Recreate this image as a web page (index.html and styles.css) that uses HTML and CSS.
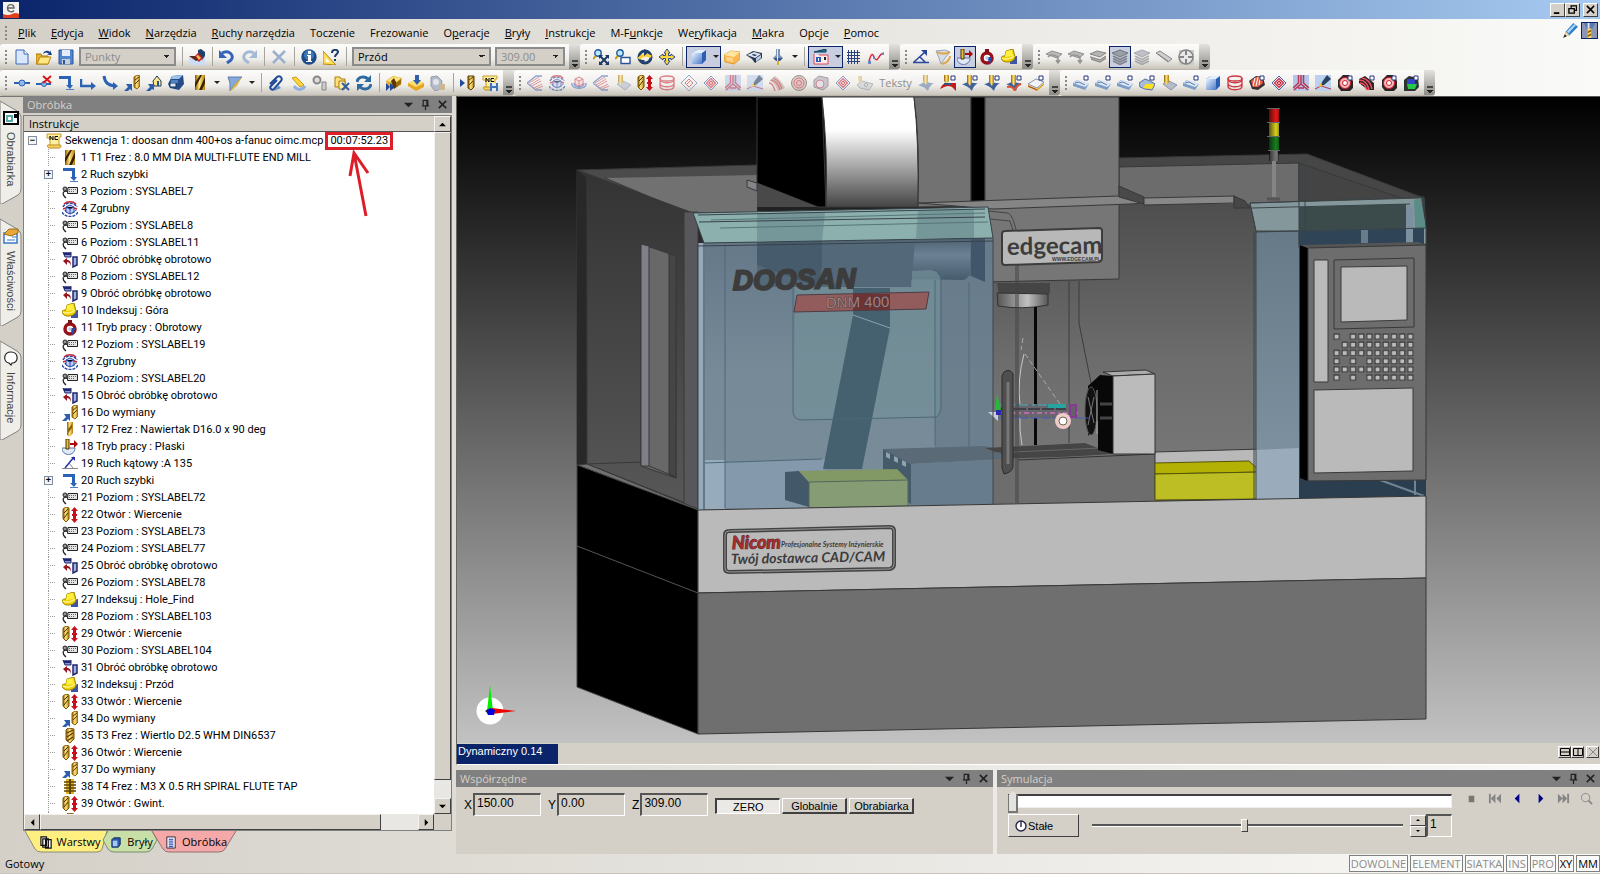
FILE: index.html
```html
<!DOCTYPE html>
<html lang="pl">
<head>
<meta charset="utf-8">
<title>Edgecam</title>
<link rel="stylesheet" href="styles.css">
</head>
<body>
<svg class="defs" aria-hidden="true">
<defs>
<linearGradient id="gold" x1="0" x2="1"><stop offset="0" stop-color="#8a5a00"/><stop offset=".45" stop-color="#ffe680"/><stop offset="1" stop-color="#b07a10"/></linearGradient>
<linearGradient id="blu" x1="0" x2="1" y2="1"><stop offset="0" stop-color="#e8f2ff"/><stop offset="1" stop-color="#4a7ac8"/></linearGradient>
</defs>
<symbol id="new" viewBox="0 0 16 16"><path d="M2 1h8l4 4v10H2z" fill="#dbe8fb" stroke="#3c66b8"/><path d="M10 1v4h4" fill="#fff" stroke="#3c66b8"/></symbol>
<symbol id="open" viewBox="0 0 16 16"><path d="M0 15V5h5l1 2h6v8z" fill="#e8b030" stroke="#a87810"/><path d="M1 15l3-7h11l-3 7z" fill="#ffe680" stroke="#b88a18"/><path d="M7 5c1-4 5-4 7-2V1l2 5h-5l2-1c-2-2-4-2-6 0z" fill="#1b3f8c"/></symbol>
<symbol id="save" viewBox="0 0 16 16"><path d="M1 1h14v14H1z" fill="#4f86cf" stroke="#2b569c"/><path d="M4 1h8v6H4z" fill="#e3ecf8"/><path d="M4 10h8v5H4z" fill="#c8ced8"/><path d="M5 11h2v4H5z" fill="#2b569c"/></symbol>
<symbol id="paint" viewBox="0 0 16 16"><path d="M0 8h16v8H0z" fill="#cdddf8"/><path d="M9 6V1l3-1 4 3v4l-3 4z" fill="#20406c"/><path d="M5 8l4-4 5 5-4 4z" fill="#c81e18"/><path d="M7 7l2-1 3 3-2 2z" fill="#f0c060"/><path d="M0 7h6l3 4-2 1z" fill="#5a2818"/></symbol>
<symbol id="undo" viewBox="0 0 16 16"><path d="M3 4c7-4 13 3 9 7l-4 3" fill="none" stroke="#3563b8" stroke-width="3"/><path d="M0 1v8h8z" fill="#3563b8"/></symbol>
<symbol id="redo" viewBox="0 0 16 16"><path d="M13 4c-7-4-13 3-9 7l4 3" fill="none" stroke="#a3b9d4" stroke-width="3"/><path d="M16 1v8H8z" fill="#a3b9d4"/></symbol>
<symbol id="del" viewBox="0 0 16 16"><path d="M2 2l12 12M14 2L2 14" stroke="#9bb0cf" stroke-width="2.5"/></symbol>
<symbol id="info" viewBox="0 0 16 16"><circle cx="8" cy="8" r="7.700" fill="#1d4c86"/><circle cx="8" cy="6" r="5" fill="#3d78b8"/><path d="M7 2h3v3H7zM6 6h4v6h1v1H5v-1h2V7H6z" fill="#fff"/></symbol>
<symbol id="help" viewBox="0 0 16 16"><path d="M0 2v13l13 1z" fill="#ffdd55" stroke="#b48a10"/><path d="M3 9v4l4 0z" fill="#fff"/><path d="M9 4c0-4 6-4 6-1 0 2-3 2-3 5M12 10v2" fill="none" stroke="#17376e" stroke-width="2"/></symbol>
<symbol id="zoomall" viewBox="0 0 16 16"><circle cx="5" cy="4" r="3.200" fill="#bfe6ff" stroke="#1c5a9c" stroke-width="1.400"/><path d="M3 7L0 10" stroke="#c89a10" stroke-width="2"/><path d="M7 7l8 8M15 7l-8 8" stroke="#1b3868" stroke-width="2"/><path d="M6 6h4L6 10zM16 6v4l-4-4zM6 16v-4l4 4zM16 16h-4l4-4z" fill="#1b3868"/></symbol>
<symbol id="zoomwin" viewBox="0 0 16 16"><circle cx="5" cy="4" r="3.200" fill="#bfe6ff" stroke="#1c5a9c" stroke-width="1.400"/><path d="M3 7L0 10" stroke="#c89a10" stroke-width="2"/><path d="M6 8.500h9v6H6z" fill="#fff" stroke="#2a5598" stroke-width="1.400"/></symbol>
<symbol id="orbit" viewBox="0 0 16 16"><circle cx="8" cy="8" r="6" fill="#f0f0e8" stroke="#22406c" stroke-width="3"/><path d="M2 10c2-4 8-5 12-2" fill="none" stroke="#ffcf30" stroke-width="3"/><path d="M7 0l5 3-5 4zM2 11l6 0-3 4z" fill="#22406c"/></symbol>
<symbol id="pan" viewBox="0 0 16 16"><path d="M8 0l3 4H9.500v2.500H12V5l4 3-4 3V9.500H9.500V12H11l-3 4-3-4h1.500V9.500H4V11L0 8l4-3v1.500h2.500V4H5z" fill="#ffd740" stroke="#284a84"/></symbol>
<symbol id="cube" viewBox="0 0 16 16"><path d="M1 4l5-3h9v10l-4 4H1z" fill="#2c5fb4"/><path d="M1 4h10v11H1z" fill="url(#blu)"/><path d="M1 4l5-3h9l-4 3z" fill="#e4f0ff"/></symbol>
<symbol id="box" viewBox="0 0 16 16"><path d="M0 6l7-4 9 1v7l-6 5-9-2z" fill="#ffb850" stroke="#e09a38"/><path d="M0 6l7-4 9 1-6 5z" fill="#ffe6a0"/><path d="M2 8l7 1v4l-6-1z" fill="#ffd488"/></symbol>
<symbol id="viewb" viewBox="0 0 16 16"><path d="M0 6l7-4 9 2v5l-7 5-3-4z" fill="#25354f"/><path d="M1 6l7-3 7 2-6 4z" fill="#dbe4f2"/><path d="M7 5l4 1-2 1-3-1z" fill="#1a2a48"/><path d="M10 9l5-3v3l-5 4z" fill="#b8c8e0"/></symbol>
<symbol id="spind" viewBox="0 0 16 16"><path d="M6 0h4v6l3 3H3l3-3z" fill="#7b91b8"/><path d="M3 9h10l-3 3H6z" fill="#3b5688"/><path d="M7 0h1v12H7z" fill="#e5ecf8"/><path d="M7 12h2v4H7z" fill="#d8b030"/></symbol>
<symbol id="views" viewBox="0 0 16 16"><path d="M1 3l12-3v3H1z" fill="#188090" stroke="#123a5c"/><path d="M1 5v10h14V6H6" fill="#ffe8ec" stroke="#d84858"/><path d="M3 8h5v5H3z" fill="#2a5cb8"/><path d="M5 9h1v3H5zM10 8h3v4h-3z" fill="#fff"/><path d="M11 8h2v3h-2z" fill="#222"/></symbol>
<symbol id="grid" viewBox="0 0 16 16"><path d="M2.500 1v14M5.500 1v14M8.500 1v14M11.500 1v14M1 3.500h13M1 6.500h13M1 9.500h13M1 12.500h13" stroke="#27447c"/></symbol>
<symbol id="curve" viewBox="0 0 16 16"><path d="M1 13C3 3 5 5 6 8s3 4 5 0 3-3 5-4" fill="none" stroke="#dc2038" stroke-width="1.500"/><path d="M0 12h3v3H0zM5 8h2v2H5zM13 4h3v2h-3z" fill="#6888c8"/></symbol>
<symbol id="angle" viewBox="0 0 16 16"><path d="M1 13L12 3M7 8l5 5M0 13.500h16" stroke="#27489c" stroke-width="1.600"/><path d="M8 1h6v6z" fill="#27489c"/></symbol>
<symbol id="anglet" viewBox="0 0 16 16"><path d="M0 12.500h16M7 7l4 5" stroke="#888" fill="none"/><path d="M3 12L12 1" stroke="#2630a8" stroke-width="1.500"/><path d="M9 1h4v4z" fill="#2630a8"/></symbol>
<symbol id="funn" viewBox="0 0 16 16"><path d="M1 2l9-1 5 2-5 6-4 6-2-6z" fill="#d6dde6" stroke="#98a6b8"/><path d="M2 3c4 2 9 2 13 0M7 15c5-1 8-5 8-8" stroke="#dca850" stroke-width="2" fill="none"/></symbol>
<symbol id="flat" viewBox="0 0 16 16"><path d="M0 9h13c0 4-3 6.500-6.500 6.500S0 13 0 9z" fill="#dfe8f6" stroke="#5d74a8"/><path d="M4 0h3v10H4z" fill="#e8c040" stroke="#4a3000"/><path d="M8 4h4V1l4 4-4 4V6H8z" fill="#a80c10"/></symbol>
<symbol id="rotary" viewBox="0 0 16 16"><circle cx="8" cy="9" r="5" fill="#fff" stroke="#981018" stroke-width="3.500"/><path d="M6 0h4v4H6z" fill="#801018"/><path d="M8 8h5l-2 8z" fill="#2848a8"/><circle cx="8" cy="9" r="1.800" fill="#bcc8dc"/></symbol>
<symbol id="index" viewBox="0 0 16 16"><path d="M9 12l6-5h1v8H9z" fill="#3c55a8"/><path d="M0 9c0-2 3-2 4-2l1-5 7-2 2 8c0 5-12 8-14 1z" fill="#f0d000" stroke="#a08400"/><path d="M5 2l6-1 1 6-8 1z" fill="#fff040"/><path d="M1 9c3 2 9 1 12-2" fill="none" stroke="#fff490" stroke-width="1.500"/></symbol>
<symbol id="lay" viewBox="0 0 16 16"><path d="M0 5l7-3 9 2-6 4z" fill="#b5b5b5" stroke="#858585"/><path d="M0 8l10 3 6-4M1 10l9 3 6-4" fill="none" stroke="#8d8d8d" stroke-width="1.500"/></symbol>
<symbol id="lay2" viewBox="0 0 16 16"><path d="M0 5l6-3 10 3-5 4z" fill="#b8b8b8" stroke="#909090"/><path d="M2 8c2-3 7-2 10 0v5M10 11l2 3 2-3" fill="none" stroke="#949494" stroke-width="1.500"/></symbol>
<symbol id="stack" viewBox="0 0 16 16"><path d="M0 4l8-3 8 3-8 4z" fill="#9a9fa8" stroke="#70757e"/><path d="M1 7l7 3.500L15 7M1 9.500L8 13l7-3.500M1 12l7 3.500 7-3.500" fill="none" stroke="#7c818a" stroke-width="1.600"/></symbol>
<symbol id="bar" viewBox="0 0 16 16"><path d="M0 4l4-2 12 8-4 3z" fill="#d0d0d0" stroke="#888"/><path d="M2 5l10 7" stroke="#888"/></symbol>
<symbol id="target" viewBox="0 0 16 16"><path d="M1 1h15v15H1z" fill="#ccc"/><circle cx="8" cy="8" r="7" fill="#e8e8e8" stroke="#848484" stroke-width="1.500"/><path d="M8 1v5M8 10v5M1 8h5M10 8h5" stroke="#848484" stroke-width="2"/></symbol>
<symbol id="pt" viewBox="0 0 16 16"><path d="M0 8h16" stroke="#2f62ae" stroke-width="2"/><circle cx="8" cy="8" r="3" fill="#8fb8ec" stroke="#2f62ae"/></symbol>
<symbol id="ptx" viewBox="0 0 16 16"><path d="M0 9h15" stroke="#2f62ae" stroke-width="2"/><circle cx="8" cy="9" r="2.500" fill="#8fb8ec" stroke="#2f62ae"/><path d="M7 1l8 7M15 1L7 8" stroke="#d81818" stroke-width="2"/></symbol>
<symbol id="rapid" viewBox="0 0 16 16"><path d="M1 1h12v9h2l-3 4-4-4h2V4H1z" fill="#2c62b4"/><path d="M8 14.500h8" stroke="#4f80c8"/></symbol>
<symbol id="feed" viewBox="0 0 16 16"><path d="M1 4v7h11" fill="none" stroke="#2c62b4" stroke-width="2.500"/><path d="M11 7l5 4-5 4z" fill="#2c62b4"/></symbol>
<symbol id="arc" viewBox="0 0 16 16"><path d="M2 1c1 7 4 9 11 10" fill="none" stroke="#2c62b4" stroke-width="3"/><path d="M11 7l5 4-5 4z" fill="#2c62b4"/></symbol>
<symbol id="chg" viewBox="0 0 16 16"><path d="M10 2l3-2 3 1v10l-3 3-3-2z" fill="url(#gold)" stroke="#8a6208"/><path d="M11 5l4-3M11 9l4-4" stroke="#5a3a00"/><path d="M0 16l4-4-2-3h6v7l-2-2-2 2z" fill="#2d5eae"/></symbol>
<symbol id="home" viewBox="0 0 16 16"><path d="M7 6l4-5 4 5v5H8z" fill="#ffe68a" stroke="#1c3c60"/><path d="M11 6h2v5h-2z" fill="#285888"/><path d="M0 16l4-4-2-3h6v6l-2-1-2 2z" fill="#2d5eae"/></symbol>
<symbol id="part" viewBox="0 0 16 16"><path d="M4 1l11-1 1 9-5 6-9-2-2-4z" fill="#244c88"/><path d="M4 1l11-1-4 4H3z" fill="#9fc0e8"/><path d="M2 8h6v4H2z" fill="#dfe9f5" stroke="#18355e"/><path d="M3 5h7v3H3z" fill="#4f80c0"/></symbol>
<symbol id="mill" viewBox="0 0 16 16"><path d="M3 0h10v15H3z" fill="url(#gold)"/><path d="M3 8l5-8h2L3 13zM7 15l6-13v6l-3 7z" fill="#382000"/></symbol>
<symbol id="filt" viewBox="0 0 16 16"><path d="M1 2h14l-7 7-5 7V8z" fill="#86a9d8" stroke="#5c7fae"/><path d="M15 2l-7 7-5 7 1 0 6-5z" fill="#dcb848"/></symbol>
<symbol id="clip" viewBox="0 0 16 16"><path d="M2 9l7-7c3-2 6 1 4 4l-7 8c-2 2-5-1-3-3l6-6" fill="none" stroke="#1f4a94" stroke-width="2"/><path d="M6 16l4-6 3 3z" fill="#5f90d0"/></symbol>
<symbol id="erase" viewBox="0 0 16 16"><path d="M2 3l4-1 8 8-4 2z" fill="#ffd540" stroke="#c89a10"/><path d="M4 11c3 5 9 4 11 0" fill="none" stroke="#8fb0e0" stroke-width="3"/></symbol>
<symbol id="gear2" viewBox="0 0 16 16"><circle cx="5" cy="5" r="3.500" fill="#ddd" stroke="#888" stroke-width="2"/><path d="M10 7h4v8h-4z" fill="#ccc" stroke="#888"/></symbol>
<symbol id="copyx" viewBox="0 0 16 16"><path d="M1 2h5l1 2h4v8H1z" fill="#ffe078" stroke="#a87c10"/><path d="M5 6h6v8H5z" fill="#fff0a8" stroke="#a87c10"/><path d="M8 8l7 7M15 8l-7 7" stroke="#345f9e" stroke-width="2"/></symbol>
<symbol id="sync" viewBox="0 0 16 16"><path d="M1 7c1-6 8-6 11-3M15 9c-1 6-8 6-11 3" fill="none" stroke="#2d6aa0" stroke-width="3"/><path d="M15 0v7H8zM1 16V9h7z" fill="#2d6aa0"/></symbol>
<symbol id="simy" viewBox="0 0 16 16"><path d="M0 6l7-5 9 2-1 7-8 4-6-4z" fill="#e8b028"/><path d="M1 6l6-4 8 1-6 5z" fill="#ffe888"/><path d="M5 6l3-3 4 8-4 3z" fill="#5a3800"/><path d="M10 8l5-4v5l-5 3z" fill="#9a6c10"/><path d="M0 8l4 4-4 4zM4 8l5 4-5 4z" fill="#1f4b98"/></symbol>
<symbol id="post" viewBox="0 0 16 16"><path d="M0 8l8-3 8 3v4l-8 4-8-5z" fill="#e6a820"/><path d="M0 8l8-3 8 3-8 4z" fill="#ffe070"/><path d="M7 0h4v5h2l-4 5-4-5h2z" fill="#315fa8"/></symbol>
<symbol id="dimgear" viewBox="0 0 16 16"><path d="M1 2l6-1 5 5-1 8-6 2-4-5z" fill="#b5bcc8" stroke="#929aa8"/><circle cx="6" cy="7" r="3" fill="#e2e6ec"/><path d="M9 9h6v6H9z" fill="#ccb890"/></symbol>
<symbol id="playmill" viewBox="0 0 16 16"><path d="M0 4l5 4-5 4z" fill="#1f4b98"/><path d="M8 1h6v11l-3 3-3-2z" fill="url(#gold)" stroke="#5a3c00"/><path d="M9 5l4-3M9 10l4-4" stroke="#5a3c00"/></symbol>
<symbol id="nc" viewBox="0 0 16 16"><path d="M1 1h14v3h-2v9H4V5H1z" fill="#fff0a0" stroke="#c89a28"/><path d="M2 12h12c2 0 1 3-1 3H4c-3 0-3-3-2-3z" fill="#f4d468" stroke="#b88a18"/><path d="M4 7V3l3 4V3M12 3.500H9v3h3" stroke="#000" fill="none"/></symbol>
<symbol id="ncs" viewBox="0 0 16 16"><use href="#nc" width="16" height="16"/><path d="M8 8h8v8H8z" fill="#3f72b8"/><path d="M10 8h4v3h-4zM10 13h4v3h-4z" fill="#dfe8f4"/></symbol>
<symbol id="diag" viewBox="0 0 16 16"><path d="M2 8l10-6M3 10l10-6M5 11l9-5M7 13l8-4M9 14l7-3" stroke="#d45a68" fill="none"/><path d="M0 8l9-7h6M0 8l9 7h6" stroke="#4a6cb8" stroke-width="1.300" fill="none"/></symbol>
<symbol id="rough" viewBox="0 0 16 16"><path d="M1 6c2-5 12-5 14 0M0 11c3 6 13 6 16 0M3 9c2 4 8 4 11 0" fill="none" stroke="#2a49a8" stroke-width="1.500" stroke-dasharray="3 1"/><path d="M4 6l4-2 4 2v5l-4 2-4-2z" fill="#c0d0f8" stroke="#2a49a8"/><path d="M4 6l4 2 4-2M8 8v5" stroke="#2a49a8"/><path d="M2 3c3-3 9-3 12 0M1 8l3-1M12 7l3 1" fill="none" stroke="#c02838" stroke-width="1.500"/></symbol>
<symbol id="blk" viewBox="0 0 16 16"><path d="M4 4l4-2 4 2v5l-4 2-4-2zM4 4l4 2 4-2M8 6v5" fill="#f8d8d8" stroke="#c84858"/><path d="M1 8c-2 7 16 7 14 0M3 8c0 5 10 5 10 0" fill="none" stroke="#4868b8" stroke-width="1.300"/></symbol>
<symbol id="millb" viewBox="0 0 16 16"><path d="M2 9l6-3 8 4-6 5z" fill="#b4bccc" stroke="#8a94a8"/><path d="M3 0h5v7l-2 3-3-3z" fill="url(#gold)"/></symbol>
<symbol id="hole" viewBox="0 0 16 16"><path d="M1 2l3-2 3 1v11l-3 3-3-3z" fill="url(#gold)" stroke="#7a5600"/><path d="M2 6l4-4M2 11l4-5" stroke="#4a3000"/><path d="M12.500 0L16 4h-2v8h2l-3.500 4L9 12h2V4H9z" fill="#c8101c"/><path d="M10 8h5" stroke="#c8101c" stroke-width="2"/></symbol>
<symbol id="coil" viewBox="0 0 16 16"><ellipse cx="8" cy="3.500" rx="7" ry="2.500" fill="none" stroke="#cc3844" stroke-width="1.300"/><path d="M1 4c0 5 14 5 14 0M1 8c0 5 14 5 14 0M1 11c0 5 14 5 14 0M1 3v9M15 3v9" fill="none" stroke="#cc3844" stroke-width="1.300"/></symbol>
<symbol id="dia" viewBox="0 0 16 16"><path d="M8 0l8 8-8 8-8-8z" fill="none" stroke="#5c7ab8"/><path d="M8 4l4 4-4 4-4-4z" fill="none" stroke="#cc3844"/><path d="M6 9l3-3" stroke="#cc3844"/></symbol>
<symbol id="dia2" viewBox="0 0 16 16"><path d="M8 1l7 7-7 7-7-7z" fill="none" stroke="#4464b0"/><path d="M8 3.500L12.500 8 8 12.500 3.500 8zM8 6l2 2-2 2-2-2z" fill="#fff" stroke="#cc2838" stroke-width="1.200"/></symbol>
<symbol id="tri" viewBox="0 0 16 16"><path d="M0 0h16v16H0z" fill="#b4c8ec"/><path d="M5.500 0v8L0 13M8 0v9L1 15M8 9l7 6M10.500 0v8l5.500 5M5 13h6" fill="none" stroke="#b83450" stroke-width="1.500"/></symbol>
<symbol id="pen" viewBox="0 0 16 16"><path d="M0 0h16v16H0z" fill="#bcd0f0"/><path d="M12 0l4 4-7 6-3 1 1-4z" fill="#27415e"/><path d="M0 14l6-3 10 3" stroke="#b83450" fill="none"/><path d="M5 8l3 3-4 1z" fill="#f0c030"/></symbol>
<symbol id="waves" viewBox="0 0 16 16"><path d="M0 6c4 0 7 5 9 10l7-3C13 7 9 3 6 1z" fill="#b8a8a4"/><path d="M2 5c5 1 8 6 9 10M4 3c5 2 8 7 9 11M0 8c3 0 5 4 6 8" fill="none" stroke="#c83c48" stroke-width="1.300"/></symbol>
<symbol id="disc" viewBox="0 0 16 16"><circle cx="8" cy="8" r="7.500" fill="#d0b0ac" stroke="#555"/><circle cx="8" cy="8" r="5" fill="none" stroke="#c02838"/><circle cx="8" cy="8" r="2.500" fill="none" stroke="#c02838"/></symbol>
<symbol id="disc2" viewBox="0 0 16 16"><path d="M1 5l5-4 9 2v8l-5 4-9-3z" fill="#b0a8b8" stroke="#706878"/><circle cx="7" cy="9" r="4" fill="#e0d8e0" stroke="#b04860"/></symbol>
<symbol id="shear" viewBox="0 0 16 16"><path d="M0 10l5-4 11 3-4 6-9-2z" fill="#c8ccd4" stroke="#8c94a4"/><path d="M1 1h4v7H2z" fill="#dcc070"/><circle cx="9" cy="10" r="1.500" fill="#fff" stroke="#777"/></symbol>
<symbol id="ml1" viewBox="0 0 16 16"><path d="M0 10c3 0 4-3 8-3s5 2 8 1c-3 2-5 4-6 8-3-4-6-4-10-6z" fill="#6682ac"/><path d="M5 0h5v6l-2 4-3-4z" fill="url(#gold)"/></symbol>
<symbol id="mlr" viewBox="0 0 16 16"><path d="M0 14c2-5 6-7 8-6h8v8l-4-4-3-1c-3 0-5 1-9 3z" fill="#c81818"/><path d="M4 0h5v6l-3 3-2-3z" fill="url(#gold)"/><path d="M4 8h8v2H4z" fill="#38507c"/><path d="M11 1h4v4h-4z" fill="#fff" stroke="#26367c"/></symbol>
<symbol id="mlb" viewBox="0 0 16 16"><path d="M0 9c3 0 4-2 7-2s6 2 9 1c-3 2-5 4-6 8-3-4-6-5-10-7z" fill="#40619a"/><path d="M5 0h5v7l-2 4-3-4z" fill="url(#gold)"/><path d="M11 1h4v4h-4z" fill="#fff" stroke="#26367c"/></symbol>
<symbol id="mlo" viewBox="0 0 16 16"><path d="M0 9c3 0 4-2 7-2s6 2 9 1c-3 2-5 4-6 8-3-4-6-5-10-7z" fill="#40619a"/><path d="M1 12c4-1 6 0 8 4M9 15c1-4 3-5 6-6" fill="none" stroke="#e05030" stroke-width="2"/><path d="M5 0h5v7l-2 4-3-4z" fill="url(#gold)"/><path d="M11 1h4v4h-4z" fill="#fff" stroke="#26367c"/></symbol>
<symbol id="slab" viewBox="0 0 16 16"><path d="M0 9l8-5 8 3-7 6z" fill="#f4f4f8" stroke="#8a94a8"/><path d="M0 10l9 4 7-6v2l-7 6-9-4z" fill="#d8a828"/><path d="M0 11l9 4" stroke="#b04820"/><path d="M11 1h4v4h-4z" fill="#fff" stroke="#26367c"/></symbol>
<symbol id="bslab" viewBox="0 0 16 16"><path d="M0 8l4-3 12 4-4 6-12-4z" fill="#7c9cc8"/><path d="M0 8l5-3 11 4-4 3z" fill="#dce8f8"/><path d="M2 8l4-1 6 3" fill="none" stroke="#5878a8"/><path d="M11 1h4v4h-4z" fill="#fff" stroke="#26367c"/></symbol>
<symbol id="yslab" viewBox="0 0 16 16"><path d="M0 8l6-4 5 2 5 3-3 6-7-1-5-2z" fill="#a8bcd8" stroke="#52729c"/><path d="M4 13l3-4h8l-2 5z" fill="#ffe020"/><path d="M11 1h4v4h-4z" fill="#fff" stroke="#26367c"/></symbol>
<symbol id="rslab" viewBox="0 0 16 16"><path d="M0 6l7-5 7 1 2 8-7 5-6-1z" fill="#3a3030"/><path d="M2 6l5-4 6 1 1 5-5 4-5 0z" fill="#e86048"/><path d="M4 11l2-8M7 11l2-9M10 10l1-7" stroke="#fff"/><path d="M11 1h4v4h-4z" fill="#fff" stroke="#26367c"/></symbol>
<symbol id="fwave" viewBox="0 0 16 16"><path d="M0 4l6-3 9 7v7H9L0 8z" fill="#2c2426"/><path d="M0 5c6 0 9 5 10 10M3 3c6 1 9 6 10 11M1 8c4 0 6 4 7 7" fill="none" stroke="#f05060" stroke-width="1.500"/><path d="M11 1h4v4h-4z" fill="#fff" stroke="#26367c"/></symbol>
<symbol id="fdisc" viewBox="0 0 16 16"><path d="M1 5l5-5h6l4 6v7l-3 3H4l-3-4z" fill="#2c2426"/><circle cx="8" cy="8" r="5.500" fill="#f8b8b8" stroke="#d01828"/><circle cx="8" cy="8" r="2.500" fill="#fff" stroke="#d01828"/><path d="M11 1h4v4h-4z" fill="#fff" stroke="#26367c"/></symbol>
<symbol id="gdisc" viewBox="0 0 16 16"><path d="M1 5l5-4 9 2 1 9-4 4H1z" fill="#2c3430"/><path d="M4 4h8v5H4z" fill="#3444c8"/><path d="M4 9h10l-2 5H5z" fill="#28c848"/><path d="M11 1h4v4h-4z" fill="#fff" stroke="#26367c"/></symbol>
<symbol id="label" viewBox="0 0 16 16"><path d="M6 3.500h9.500v6H5.500z" fill="#e4e4e4" stroke="#222"/><path d="M7 5.500h7M7 7.500h6" stroke="#666" stroke-dasharray="1 1"/><circle cx="3" cy="5" r="2" fill="#999" stroke="#222"/><path d="M5.500 7.500C0 6 0 11 4 14" fill="none" stroke="#222" stroke-width="1.200"/></symbol>
<symbol id="rot" viewBox="0 0 16 16"><path d="M1 0h8v5H3z" fill="#8890d8" stroke="#20286c"/><path d="M2 2h7" stroke="#20286c" stroke-width="2"/><path d="M11 5h4v8l-4 2z" fill="#a8b0e0" stroke="#20286c" stroke-width="1.500"/><path d="M1 9l4-3v2c3 0 4 2 4 6-1-3-2-4-4-4v3z" fill="#981420"/></symbol>
<symbol id="bit" viewBox="0 0 16 16"><path d="M5 0h6v11l-3 4-3-2z" fill="url(#gold)"/><path d="M6 7l4-5v4l-4 5z" fill="#8a6010"/></symbol>
<symbol id="drill" viewBox="0 0 16 16"><path d="M4 2l2-2 6 1v10l-4 4-4-3z" fill="url(#gold)" stroke="#7a5200"/><path d="M5 5l6-3M5 9l6-4M5 13l6-4" stroke="#5a3a00" stroke-width="1.200"/></symbol>
<symbol id="tap" viewBox="0 0 16 16"><path d="M4 0h8v15H4z" fill="#dfb020"/><path d="M2 3h12M2 6h12M2 9h12M2 12h12" stroke="#5c4400" stroke-width="1.600"/><path d="M8 0v15" stroke="#5c4400" stroke-width="2"/></symbol>
<symbol id="pin" viewBox="0 0 12 12"><path d="M3.500 7V1.500h5V7M2 7.500h8M6 8v4M7.500 2v5" fill="none" stroke="#222" stroke-width="1.300"/></symbol>
<symbol id="x" viewBox="0 0 12 12"><path d="M2 2l8 8M10 2l-8 8" stroke="currentColor" stroke-width="1.700"/></symbol>
<symbol id="dn" viewBox="0 0 12 12"><path d="M1 4h10L6 9z" fill="currentColor"/></symbol>
<symbol id="au" viewBox="0 0 8 8"><path d="M4 2l4 4H0z"/></symbol>
<symbol id="ad" viewBox="0 0 8 8"><path d="M0 2h8L4 6z"/></symbol>
<symbol id="al" viewBox="0 0 8 8"><path d="M6 0v8L2 4z"/></symbol>
<symbol id="ar" viewBox="0 0 8 8"><path d="M2 0v8l4-4z"/></symbol>
</svg>

<header class="titlebar">
  <svg class="logo" viewBox="0 0 16 16"><path d="M0 0h16v16H0z" fill="#f4f2f0"/><path d="M0 12q5 2 9 0t7 0v4H0z" fill="#e04020"/><path d="M5 6h6c0-4.500-6.500-4.500-6.500 0 0 4.500 5 4.500 6.500 2.500" fill="none" stroke="#666" stroke-width="1.400"/></svg>
  <div class="winbtns">
    <button aria-label="Minimalizuj"><svg viewBox="0 0 10 10"><path d="M1 8h6v2H1z"/></svg></button><button aria-label="Przywróć"><svg viewBox="0 0 10 10"><path d="M3.500 3V1h6v5H7M1 4h6v5H1z" fill="none" stroke="#000" stroke-width="1.500"/></svg></button><button class="gap" aria-label="Zamknij"><svg viewBox="0 0 10 10"><path d="M1 1l8 8M9 1L1 9" stroke="#000" stroke-width="1.700"/></svg></button>
  </div>
</header>
<nav class="menubar">
  <i class="grip"></i>
  <a href="#"><u>P</u>lik</a><a href="#"><u>E</u>dycja</a><a href="#"><u>W</u>idok</a><a href="#"><u>N</u>arzędzia</a><a href="#"><u>R</u>uchy narzędzia</a><a href="#">Toczenie</a><a href="#">Frezowanie</a><a href="#">O<u>p</u>eracje</a><a href="#"><u>B</u>ryły</a><a href="#"><u>I</u>nstrukcje</a><a href="#">M-F<u>u</u>nkcje</a><a href="#">We<u>r</u>yfikacja</a><a href="#"><u>M</u>akra</a><a href="#">Opcje</a><a href="#"><u>P</u>omoc</a>
  <div class="modes">
    <button aria-label="Projektowanie"><svg viewBox="0 0 16 16"><path d="M1 15l2-6 8-9 5 4-9 9z" fill="#2f7cc8"/><path d="M4 9l8-8 2 1-8 9z" fill="#a8d4f8"/><path d="M1 15l2-6 4 4z" fill="#f0d8a0"/><path d="M0 16l2-4 2 2z" fill="#222"/></svg></button>
    <button class="on" aria-label="Technologia"><svg viewBox="0 0 16 16"><path d="M2 0h12l-3 6H5z" fill="#5878b0"/><path d="M6 0h2v6H6z" fill="#dfe8f4"/><path d="M6 6h4v10H6z" fill="#ffd860"/><path d="M6 9l4-2v2l-4 2zM6 13l4-2v2l-4 2z" fill="#8a6010"/></svg></button>
  </div>
</nav>

<div class="toolrow">
 <div class="tbar"><i class="grip"></i>
  <button aria-label="Nowy"><svg><use href="#new"/></svg></button><button aria-label="Otwórz"><svg><use href="#open"/></svg></button><button aria-label="Zapisz"><svg><use href="#save"/></svg></button>
  <select class="combo c1" disabled aria-label="Typ"><option>Punkty</option></select><i class="sep"></i>
  <button aria-label="Maluj"><svg><use href="#paint"/></svg></button><i class="sep"></i>
  <button aria-label="Cofnij"><svg><use href="#undo"/></svg></button><button aria-label="Ponów"><svg><use href="#redo"/></svg></button><i class="sep"></i>
  <button aria-label="Usuń"><svg><use href="#del"/></svg></button><i class="sep"></i>
  <button aria-label="Informacja"><svg><use href="#info"/></svg></button><button aria-label="Pomiar"><svg><use href="#help"/></svg></button><i class="sep"></i>
  <select class="combo c2" aria-label="Widok"><option>Przód</option></select>
  <select class="combo c3" disabled aria-label="Poziom"><option>309.00</option></select><i class="more"></i></div>
 <div class="tbar"><i class="grip"></i>
  <button aria-label="Pokaż wszystko"><svg><use href="#zoomall"/></svg></button><button aria-label="Okno"><svg><use href="#zoomwin"/></svg></button><button aria-label="Obrót"><svg><use href="#orbit"/></svg></button><button aria-label="Przesuń"><svg><use href="#pan"/></svg></button><i class="sep"></i>
  <button class="wide on" aria-label="Cieniowanie"><svg><use href="#cube"/></svg><b></b></button><button aria-label="Półfabrykat"><svg><use href="#box"/></svg></button><button aria-label="Mocowanie"><svg><use href="#viewb"/></svg></button><button class="wide" aria-label="Narzędzie"><svg><use href="#spind"/></svg><b></b></button><i class="sep"></i>
  <button class="wide on" aria-label="Widoki"><svg><use href="#views"/></svg><b></b></button><button aria-label="Siatka"><svg><use href="#grid"/></svg></button><button aria-label="Krzywa"><svg><use href="#curve"/></svg></button><i class="more"></i></div>
 <div class="tbar"><i class="grip"></i>
  <button aria-label="Ruch kątowy"><svg><use href="#angle"/></svg></button><button aria-label="Konwersja"><svg><use href="#funn"/></svg></button><button class="on" aria-label="Płaski"><svg><use href="#flat"/></svg></button><button aria-label="Obrotowy"><svg><use href="#rotary"/></svg></button><button aria-label="Indeksuj"><svg><use href="#index"/></svg></button><i class="more"></i></div>
 <div class="tbar"><i class="grip"></i>
  <button aria-label="Warstwa 1"><svg><use href="#lay2"/></svg></button><button aria-label="Warstwa 2"><svg><use href="#lay2"/></svg></button><button aria-label="Warstwa 3"><svg><use href="#lay"/></svg></button><button class="on" aria-label="Warstwa 4"><svg><use href="#stack"/></svg></button><button class="dim" aria-label="Warstwa 5"><svg><use href="#stack"/></svg></button><button aria-label="Płyta"><svg><use href="#bar"/></svg></button><button aria-label="Cel"><svg><use href="#target"/></svg></button><i class="more"></i></div>
</div>
<div class="toolrow">
 <div class="tbar"><i class="grip"></i>
  <button aria-label="Punkt"><svg><use href="#pt"/></svg></button><button aria-label="Usuń punkt"><svg><use href="#ptx"/></svg></button><button aria-label="Ruch szybki"><svg><use href="#rapid"/></svg></button><button aria-label="Ruch roboczy"><svg><use href="#feed"/></svg></button><button aria-label="Łuk"><svg><use href="#arc"/></svg></button><button aria-label="Do wymiany"><svg><use href="#chg"/></svg></button><button aria-label="Do bazy"><svg><use href="#home"/></svg></button><button aria-label="Detal"><svg><use href="#part"/></svg></button>
  <button class="wide" aria-label="Frez"><svg><use href="#mill"/></svg><b></b></button><button class="wide" aria-label="Filtr"><svg><use href="#filt"/></svg><b></b></button><i class="sep"></i>
  <button aria-label="Spinacz"><svg><use href="#clip"/></svg></button><button aria-label="Gumka"><svg><use href="#erase"/></svg></button><button aria-label="Opcje narzędzia"><svg><use href="#gear2"/></svg></button><button aria-label="Usuń kopię"><svg><use href="#copyx"/></svg></button><button aria-label="Odśwież"><svg><use href="#sync"/></svg></button><i class="sep"></i>
  <button aria-label="Symuluj"><svg><use href="#simy"/></svg></button><button aria-label="Półfabrykat w dół"><svg><use href="#post"/></svg></button><button aria-label="Przekładnia"><svg><use href="#dimgear"/></svg></button><i class="sep"></i>
  <button aria-label="Uruchom"><svg><use href="#playmill"/></svg></button><button aria-label="Generuj NC"><svg><use href="#ncs"/></svg></button><i class="more"></i></div>
 <div class="tbar"><i class="grip"></i>
  <button class="dim" aria-label="Planowanie"><svg><use href="#diag"/></svg></button><button class="dim" aria-label="Zgrubny"><svg><use href="#rough"/></svg></button><button class="dim" aria-label="Resztki"><svg><use href="#blk"/></svg></button><button class="dim" aria-label="Równoległy"><svg><use href="#diag"/></svg></button><button class="dim" aria-label="Profil"><svg><use href="#millb"/></svg></button><button aria-label="Otwór"><svg><use href="#hole"/></svg></button><button class="dim" aria-label="Spirala"><svg><use href="#coil"/></svg></button><button class="dim" aria-label="Stały krok"><svg><use href="#dia"/></svg></button><button class="dim" aria-label="Płaszczyzny"><svg><use href="#dia2"/></svg></button><button class="dim" aria-label="Naroża"><svg><use href="#tri"/></svg></button><button class="dim" aria-label="Ołówek"><svg><use href="#pen"/></svg></button><button class="dim" aria-label="Krzywe"><svg><use href="#waves"/></svg></button><button class="dim" aria-label="Kołowy"><svg><use href="#disc"/></svg></button><button class="dim" aria-label="Obrotowe"><svg><use href="#disc2"/></svg></button><button class="dim" aria-label="Projekcja"><svg><use href="#dia2"/></svg></button><button class="dim" aria-label="Skos"><svg><use href="#shear"/></svg></button>
  <button class="txt" disabled>Teksty</button>
  <button class="dim" aria-label="5 osi A"><svg><use href="#ml1"/></svg></button><button aria-label="5 osi B"><svg><use href="#mlr"/></svg></button><button aria-label="5 osi C"><svg><use href="#mlb"/></svg></button><button aria-label="5 osi D"><svg><use href="#mlb"/></svg></button><button aria-label="5 osi E"><svg><use href="#mlo"/></svg></button><button aria-label="5 osi F"><svg><use href="#slab"/></svg></button><i class="more"></i></div>
 <div class="tbar"><i class="grip"></i>
  <button aria-label="Cykl 1"><svg><use href="#bslab"/></svg></button><button aria-label="Cykl 2"><svg><use href="#bslab"/></svg></button><button aria-label="Cykl 3"><svg><use href="#bslab"/></svg></button><button aria-label="Cykl 4"><svg><use href="#yslab"/></svg></button><button aria-label="Cykl 5"><svg><use href="#millb"/></svg></button><button aria-label="Cykl 6"><svg><use href="#bslab"/></svg></button><button aria-label="Cykl 7"><svg><use href="#cube"/></svg></button><button aria-label="Cykl 8"><svg><use href="#coil"/></svg></button><button aria-label="Cykl 9"><svg><use href="#rslab"/></svg></button><button aria-label="Cykl 10"><svg><use href="#dia2"/></svg></button><button aria-label="Cykl 11"><svg><use href="#tri"/></svg></button><button aria-label="Cykl 12"><svg><use href="#pen"/></svg></button><button aria-label="Cykl 13"><svg><use href="#fdisc"/></svg></button><button aria-label="Cykl 14"><svg><use href="#fwave"/></svg></button><button aria-label="Cykl 15"><svg><use href="#fdisc"/></svg></button><button aria-label="Cykl 16"><svg><use href="#gdisc"/></svg></button><i class="more"></i></div>
</div>

<main class="main">
 <aside class="sidetabs">
  <button class="stab"><svg class="shape" viewBox="0 0 22 104" preserveAspectRatio="none"><path d="M0 1l17 10q4 3 4 6v72q0 4-3 6L2 104H0z" fill="#f0eee9" stroke="#808080"/></svg><svg class="ico" viewBox="0 0 16 16"><path d="M1 2h14v12H1z" fill="#fff" stroke="#000" stroke-width="2"/><path d="M3 5h7v7H3z" fill="#58a8a8"/><path d="M5 7h3v3H5z" fill="#fff"/><path d="M11 4h3v4h-3z"/></svg><span>Obrabiarka</span></button>
  <button class="stab t2"><svg class="shape" viewBox="0 0 22 108" preserveAspectRatio="none"><path d="M0 1l17 10q4 3 4 6v76q0 4-3 6L2 108H0z" fill="#f0eee9" stroke="#808080"/></svg><svg class="ico" viewBox="0 0 16 16"><path d="M1 5h13v10H1z" fill="#fff" stroke="#3a78c8" stroke-width="1.500"/><path d="M4 12h8M9 9h4" stroke="#3a78c8"/><path d="M1 6l5-5 9 0v4l-7 3z" fill="#e8a838" stroke="#9a6818"/></svg><span>Właściwości</span></button>
  <button class="stab t3"><svg class="shape" viewBox="0 0 22 100" preserveAspectRatio="none"><path d="M0 1l17 10q4 3 4 6v68q0 4-3 6L2 100H0z" fill="#f0eee9" stroke="#808080"/></svg><svg class="ico" viewBox="0 0 16 16"><path d="M8 2c8 0 8 11 1 11l-1 2-2-2C0 12 0 2 8 2z" fill="#fff" stroke="#222" stroke-width="1.200"/></svg><span>Informacje</span></button>
 </aside>

 <section class="left">
  <div class="phead"><span>Obróbka</span><button aria-label="Menu"><svg><use href="#dn"/></svg></button><button aria-label="Przypnij"><svg><use href="#pin"/></svg></button><button aria-label="Zamknij"><svg><use href="#x"/></svg></button></div>
  <div class="treebox">
   <div class="thead">Instrukcje</div>
   <div class="vscroll"><button aria-label="W górę"><svg><use href="#au"/></svg></button><i class="thumb"></i><i class="dith"></i><button aria-label="W dół"><svg><use href="#ad"/></svg></button></div>
   <ul class="tree">
    <li class="root"><button class="exp" aria-label="Zwiń">−</button><svg><use href="#nc"/></svg><span>Sekwencja 1: doosan dnm 400+os a-fanuc oimc.mcp</span><span class="time">00:07:52.23<svg class="arrow" viewBox="0 0 24 68"><path d="M18 66L6 3M2 26L6 3l14 20" fill="none" stroke="#dc1e28" stroke-width="3"/></svg></span></li>
    <li><i></i><svg><use href="#mill"/></svg>1 T1 Frez : 8.0 MM DIA MULTI-FLUTE END MILL</li>
    <li><button class="exp" aria-label="Rozwiń">+</button><svg><use href="#rapid"/></svg>2 Ruch szybki</li>
    <li><i></i><svg><use href="#label"/></svg>3 Poziom : SYSLABEL7</li>
    <li><i></i><svg><use href="#rough"/></svg>4 Zgrubny</li>
    <li><i></i><svg><use href="#label"/></svg>5 Poziom : SYSLABEL8</li>
    <li><i></i><svg><use href="#label"/></svg>6 Poziom : SYSLABEL11</li>
    <li><i></i><svg><use href="#rot"/></svg>7 Obróć obróbkę obrotowo</li>
    <li><i></i><svg><use href="#label"/></svg>8 Poziom : SYSLABEL12</li>
    <li><i></i><svg><use href="#rot"/></svg>9 Obróć obróbkę obrotowo</li>
    <li><i></i><svg><use href="#index"/></svg>10 Indeksuj : Góra</li>
    <li><i></i><svg><use href="#rotary"/></svg>11 Tryb pracy : Obrotowy</li>
    <li><i></i><svg><use href="#label"/></svg>12 Poziom : SYSLABEL19</li>
    <li><i></i><svg><use href="#rough"/></svg>13 Zgrubny</li>
    <li><i></i><svg><use href="#label"/></svg>14 Poziom : SYSLABEL20</li>
    <li><i></i><svg><use href="#rot"/></svg>15 Obróć obróbkę obrotowo</li>
    <li><i></i><svg><use href="#chg"/></svg>16 Do wymiany</li>
    <li><i></i><svg><use href="#bit"/></svg>17 T2 Frez : Nawiertak D16.0 x 90 deg</li>
    <li><i></i><svg><use href="#flat"/></svg>18 Tryb pracy : Płaski</li>
    <li><i></i><svg><use href="#anglet"/></svg>19 Ruch kątowy :A 135</li>
    <li><button class="exp" aria-label="Rozwiń">+</button><svg><use href="#rapid"/></svg>20 Ruch szybki</li>
    <li><i></i><svg><use href="#label"/></svg>21 Poziom : SYSLABEL72</li>
    <li><i></i><svg><use href="#hole"/></svg>22 Otwór : Wiercenie</li>
    <li><i></i><svg><use href="#label"/></svg>23 Poziom : SYSLABEL73</li>
    <li><i></i><svg><use href="#label"/></svg>24 Poziom : SYSLABEL77</li>
    <li><i></i><svg><use href="#rot"/></svg>25 Obróć obróbkę obrotowo</li>
    <li><i></i><svg><use href="#label"/></svg>26 Poziom : SYSLABEL78</li>
    <li><i></i><svg><use href="#index"/></svg>27 Indeksuj : Hole_Find</li>
    <li><i></i><svg><use href="#label"/></svg>28 Poziom : SYSLABEL103</li>
    <li><i></i><svg><use href="#hole"/></svg>29 Otwór : Wiercenie</li>
    <li><i></i><svg><use href="#label"/></svg>30 Poziom : SYSLABEL104</li>
    <li><i></i><svg><use href="#rot"/></svg>31 Obróć obróbkę obrotowo</li>
    <li><i></i><svg><use href="#index"/></svg>32 Indeksuj : Przód</li>
    <li><i></i><svg><use href="#hole"/></svg>33 Otwór : Wiercenie</li>
    <li><i></i><svg><use href="#chg"/></svg>34 Do wymiany</li>
    <li><i></i><svg><use href="#drill"/></svg>35 T3 Frez : Wiertlo D2.5 WHM DIN6537</li>
    <li><i></i><svg><use href="#hole"/></svg>36 Otwór : Wiercenie</li>
    <li><i></i><svg><use href="#chg"/></svg>37 Do wymiany</li>
    <li><i></i><svg><use href="#tap"/></svg>38 T4 Frez : M3 X 0.5 RH SPIRAL FLUTE TAP</li>
    <li><i></i><svg><use href="#hole"/></svg>39 Otwór : Gwint.</li>
    <li><i></i><svg><use href="#drill"/></svg></li>
   </ul>
   <div class="hscroll"><button aria-label="W lewo"><svg><use href="#al"/></svg></button><i class="thumb"></i><i class="dith"></i><button aria-label="W prawo"><svg><use href="#ar"/></svg></button></div>
  </div>
  <div class="btabs">
   <button class="w"><svg class="shape" viewBox="0 0 84 22" preserveAspectRatio="none"><path d="M1 0l10 18q2 3 6 3h56q4 0 5-3L83 0" fill="#ffee80" stroke="#8c8c70"/></svg><svg class="ico" viewBox="0 0 14 14"><path d="M1 1h6v9H1zM3 3h6v9H3zM6 4h6v9H6z" fill="#fff" stroke="#111" stroke-width="1.300"/></svg><span>Warstwy</span></button>
   <button class="b"><svg class="shape" viewBox="0 0 56 22" preserveAspectRatio="none"><path d="M6 0L1 9l5 9q2 3 6 3h32q4 0 6-3l5-9L50 0" fill="#c8dfa8" stroke="#7c8c70"/></svg><svg class="ico" viewBox="0 0 14 14"><path d="M2 4l2-2h7v7l-2 3H2z" fill="#2a5aa8" stroke="#0c2858"/><path d="M3 5h5v6H3z" fill="#a8c8f4"/></svg><span>Bryły</span></button>
   <button class="o"><svg class="shape" viewBox="0 0 86 22" preserveAspectRatio="none"><path d="M1 0l11 18q2 3 6 3h50q4 0 6-3L85 0" fill="#f4a8a8" stroke="#987070"/></svg><svg class="ico" viewBox="0 0 14 14"><path d="M2 1h9v12H2z" fill="#fff" stroke="#223"/><path d="M4 3.500h5M4 5.500h5M4 7.500h5M4 9.500h5M4 11.500h5" stroke="#1020a0"/></svg><span>Obróbka</span></button>
  </div>
 </section>

 <section class="right">
  <div class="view">
  <svg class="scene" viewBox="457 97 1143 646" preserveAspectRatio="xMinYMin slice">
   <defs>
    <linearGradient id="bg" x2="0" y2="1"><stop offset="0" stop-color="#000"/><stop offset="1" stop-color="#c2c2c2"/></linearGradient>
    <linearGradient id="wall" x2="0" y2="1"><stop offset="0" stop-color="#333"/><stop offset="1" stop-color="#585858"/></linearGradient>
    <linearGradient id="cyl" x2="0" y2="1"><stop offset="0" stop-color="#fff"/><stop offset=".3" stop-color="#fff"/><stop offset="1" stop-color="#444"/></linearGradient>
    <linearGradient id="back" x2="0" y2="1"><stop offset="0" stop-color="#4e4e4e"/><stop offset=".5" stop-color="#6c6c6c"/><stop offset="1" stop-color="#7c7c7c"/></linearGradient>
    <linearGradient id="glass" x2="0" y2="1"><stop offset="0" stop-color="#647888"/><stop offset=".5" stop-color="#778a98"/><stop offset="1" stop-color="#798c9a"/></linearGradient>
    <linearGradient id="rglass" x2="0" y2="1"><stop offset="0" stop-color="#667a88"/><stop offset="1" stop-color="#8195a4"/></linearGradient>
    <linearGradient id="sp" x2="1" y2="0"><stop offset="0" stop-color="#555"/><stop offset=".6" stop-color="#c0c0c0"/><stop offset="1" stop-color="#555"/></linearGradient>
    <linearGradient id="lamp" x2="1" y2="0"><stop offset="0" stop-opacity=".6"/><stop offset=".7" stop-opacity="0"/><stop offset="1" stop-opacity=".3"/></linearGradient>
    <linearGradient id="drum" x2="0" y2="1"><stop offset="0" stop-color="#4c6172"/><stop offset=".4" stop-color="#6c8294"/><stop offset="1" stop-color="#465b6c"/></linearGradient>
    <pattern id="keys" x="1333" y="333" width="8.200" height="8.200" patternUnits="userSpaceOnUse"><path d="M1 1h5.200v5.200H1z" fill="#bcbcbc" stroke="#333"/></pattern>
   </defs>
   <path d="M457 97h1143v646H457z" fill="url(#bg)"/>
   <g stroke="#383838" stroke-width="1">
    <path d="M577 170L757 165 757 213 688 213z" fill="#4b4b4b"/>
    <path d="M605 178L757 175V212H688z" fill="#717171" stroke="none"/>
    <path d="M577 170L693 213 698 510 577 465z" fill="url(#wall)"/>
    <path d="M577 170l10 8v287l-10 0z" fill="#282828" stroke="none"/>
    <path d="M587 178V464M605 178L690 214" fill="none"/>
    <path d="M1118 158L1307 154 1424 198 1424 208 1119 208z" fill="#464646"/>
    <path d="M1119 167L1299 163V205H1119z" fill="#6c6c6c"/>
    <path d="M1299 163L1424 206V497L1299 500z" fill="#444"/>
    <path d="M985 204H1299V510H985z" fill="url(#back)" stroke="none"/>
    <path d="M757 97H822L826 207 818 207 757 183z" fill="#000"/>
    <path d="M757 183L818 207H757z" fill="#494949" stroke="none"/>
    <path d="M747 180l10 3v8l-10-4z" fill="#84848c"/>
    <path d="M822 97Q828 150 826 207H918Q919 140 914 97z" fill="url(#cyl)"/>
    <path d="M914 97H971V206L918 207Q920 140 914 97z" fill="#727272"/>
    <path d="M971 97h14V206h-14z" fill="#000"/>
    <path d="M985 97H1119V279L985 282z" fill="#767676"/>
    <path d="M918 203L1119 196 1144 203 1130 204 993 209z" fill="#858585"/>
    <path d="M1119 186l25 11v7l-25-7z" fill="#494949"/>
    <path d="M1144 198L1234 196V203L1144 205z" fill="#888"/>
    <path d="M1234 196l11 5 5 7h-16z" fill="#464646"/>
    <path d="M641 244l35 12v222l-35-12z" fill="#686868"/><path d="M641 244l8 2v220l-8 0z" fill="#7f7f88"/><path d="M669 254l7 2v222l-7-3z" fill="#454545"/>
    <path d="M587 464L641 462M587 464L698 508M649 466L676 477" fill="none"/>
    <path d="M684 212l14 0v298l-14-5z" fill="#58585c"/><path d="M577 465L587 464 698 509V511z" fill="#707070"/>
   </g>
   <!-- front door -->
   <path d="M698 243L993 238V504L698 510z" fill="url(#glass)"/>
   <path d="M698 243h7v267h-7z" fill="#95abbc"/><path d="M705 463L825 459V508H705z" fill="#8499ab"/><path d="M705 460l20 0v49h-20z" fill="#96abbc"/>
   <path d="M935 240L993 238V504L935 505z" fill="#687c8b" opacity=".8"/>
   <path d="M757 241L971 238V276L911 280 911 287H757z" fill="#536878"/>
   <path d="M757 241H822V265L818 287 757 265z" fill="#465b6c"/>
   <path d="M915 240L971 238 970 272Q968 280 962 280L912 279z" fill="url(#drum)"/>
   <path d="M971 238h14v44l-14-6z" fill="#41566a"/>
   <path d="M795 287V412Q795 420 803 420L934 418Q940 416 940 408V278Q938 270 930 270L912 271V287z" fill="#739099" opacity=".7"/>
   <path d="M853 288H890V328L862 469H823L853 315z" fill="#45606e"/>
   <path d="M793 288V412Q794 420 802 420L936 417Q941 414 941 406V278Q940 270 932 270M935 280V446M725 245V508M969 282V446M705 463L822 459" fill="none" stroke="#4d6878"/>
   <path d="M853 315L890 328" stroke="#8aa4ae"/>
   <path d="M693 213L988 207 993 238 704 243z" fill="#8cb0ae"/>
   <path d="M757 213H825L822 241H757zM918 210H974V238H916z" fill="#76979a"/>
   <path d="M711 220L985 213M720 228L988 222" stroke="#557577" fill="none"/>
   <g fill="none" stroke="#384248"><path d="M693 213L988 207 993 238 704 243zM698 215L985 209M699 222L985 217M698 246L993 241M704 243V510M698 243V510"/></g>
   <path d="M883 449L985 446 1018 455V458L911 464z" fill="#5a6a76"/><path d="M883 449L911 464V505L883 474z" fill="#465b6a"/><path d="M911 464L993 460V505H911z" fill="#677d8d"/>
   <path d="M886 452l4 2v5l-4-2zM894 456l4 2v5l-4-2zM902 460l4 2v5l-4-2z" fill="#8ea2b0"/>
   <path d="M785 472L799 471 809 482V507L785 500z" fill="#435868"/><path d="M799 471L897 469 908 480 809 482z" fill="#829865"/><path d="M809 482L908 480V506L809 508z" fill="#869c74" stroke="#50685c"/>
   <!-- spindle and work area -->
   <path d="M997 283H1050V293L1048 295H999z" fill="#454545"/><path d="M997 293L1048 294V305Q1022 310 998 306z" fill="url(#sp)" stroke="#333"/>
   <path d="M1034 307h3V445h-3z" fill="#080808"/><path d="M1069 281V443M1079 281V323L1092 388" stroke="#3c3c3c" fill="none"/>
   <path d="M985 448L1085 443 1113 454 1018 460z" fill="#454545"/><path d="M993 453L1100 448" stroke="#666"/>
   <path d="M993 459L1155 454V501L993 504z" fill="#6d6d6d"/>
   <path d="M1018 460L1155 454" stroke="#333"/>
   <path d="M1155 452L1299 448V500H1155z" fill="#b9b9b9" stroke="#383838"/>
   <path d="M1155 463L1249 461 1261 472 1155 474z" fill="#b3b204" stroke="#55540a"/><path d="M1155 474L1261 472V499L1155 500z" fill="#bdbd24" stroke="#55540a"/>
   <path d="M1100 375L1113 376V454L1098 450V420L1088 436V386z" fill="#080808"/>
   <ellipse cx="1091" cy="411" rx="6" ry="24" fill="#111" stroke="#555"/><path d="M1097 390v44" stroke="#aaa"/><path d="M1088 397l6 26M1088 425l6-28" stroke="#777"/>
   <path d="M1103 372L1146 370 1155 374 1113 376z" fill="#ababab" stroke="#333"/><path d="M1113 376L1155 374V454H1113z" fill="#bbb" stroke="#333"/>
   <path d="M1100 404h12M1100 418h12" stroke="#444" stroke-width="3"/>
   <path d="M1024 354Q1017 380 1020 405V430L1022 445" stroke="#c8c8c8" fill="none"/><path d="M1023 338L1021 350M1025 354L1060 404" stroke="#aaa" fill="none" stroke-dasharray="5 3"/>
   <path d="M1001 404h76v14h-76z" fill="#66666c"/>
   <path d="M1000 405h50" stroke="#5a8c98" stroke-width="2" stroke-dasharray="9 4 3 3"/><path d="M1048 406h18" stroke="#26a4a0" stroke-width="4"/><path d="M998 413h80" stroke="#b86aa8" stroke-width="2" stroke-dasharray="5 3 2 3"/><path d="M998 418h92" stroke="#4058c8" stroke-dasharray="8 3"/><path d="M1000 409h66" stroke="#404048" stroke-width="2" stroke-dasharray="12 2"/>
   <path d="M1070 405h6v12h-6z" fill="#66606c" stroke="#902ca0" stroke-width="1.500"/><circle cx="1063" cy="421" r="8" fill="#f0ccc8"/><circle cx="1063" cy="421" r="4" fill="#fff" stroke="#665"/>
   <path d="M995 410l2-16 4 16z" fill="#28b838"/><path d="M988 412h10v9z" fill="#ccd"/><path d="M996 410h5v5h-5z" fill="#2828b0"/>
   <path d="M1004 372q6-4 9 2v92q0 6-9 8l-2-6V376z" fill="#4f4f4f" stroke="#2c2c2c"/><path d="M1008 382v82" stroke="#777" stroke-width="3"/>
   <path d="M993 238V504M1016 240V503M1018 240V503M988 211L1008 213Q1014 215 1018 240M990 219L1010 221 1016 240" stroke="#444" fill="none"/>
   <!-- right glass -->
   <path d="M1256 232L1299 231V498L1256 500z" fill="url(#rglass)"/><path d="M1256 450L1299 448V498L1256 500z" fill="#9aacbc"/>
   <path d="M1250 203L1420 198 1426 228V244H1299V231H1256z" fill="#84989c" stroke="#444"/>
   <path d="M1299 207L1406 204V229L1299 231z" fill="#3b4b4b"/><path d="M1299 231L1424 228V244L1308 247 1299 245z" fill="#2f4456"/><path d="M1414 200L1421 198 1426 228H1415z" fill="#5c8c88"/><path d="M1361 230h7v13h-7z" fill="#697c8c"/><path d="M1406 206h7v37h-7z" fill="#7d909f"/>
   <path d="M1250 203L1424 197 1426 228 1256 232zM1252 208L1410 204M1256 232V500M1254 232V500M1299 163V248M1305 160V245" fill="none" stroke="#3a4448"/>
   <path d="M1299 479L1426 480V497L1299 500z" fill="#2b3e4f"/><path d="M1380 480L1424 496M1415 480V495" stroke="#718494" stroke-width="2"/>
   <path d="M1300 245L1308 248V481L1300 478z" fill="#000"/><path d="M1300 245L1418 242 1426 245 1308 248z" fill="#555"/><path d="M1308 248L1426 245V480L1308 481z" fill="#6d6d6d" stroke="#383838"/>
   <path d="M1314 260h14V382h-14zM1341 267L1407 266V320L1341 322zM1314 390L1413 388V471L1314 473z" fill="#bababa" stroke="#3a3a3a"/><path d="M1334 260L1414 258V327L1334 329z" fill="none" stroke="#383838"/>
   <path d="M1333 333H1415V382H1333z" fill="url(#keys)"/><path d="M1341 333h8v8h-8zM1333 341h8v8h-8zM1341 357h8v9h-8zM1357 357h9v9h-9zM1341 374h8v9h-8zM1357 374h9v9h-9z" fill="#6d6d6d"/>
   <!-- signal tower -->
   <path d="M1269 108h10v14h-10z" fill="#e81818"/><path d="M1269 122h10v14h-10z" fill="#d8d020"/><path d="M1269 136h10v14h-10z" fill="#188020"/><path d="M1270 150h8v11h-8z" fill="#777"/><path d="M1269 108h10v53h-10z" fill="url(#lamp)"/><path d="M1272 161h4v36h-4z" fill="#858585"/><path d="M1267 108.500h13M1267 122.500h13M1267 136.500h13M1268 150.500h12" stroke="#666"/><path d="M1267 199h13" stroke="#555" stroke-width="3"/>
   <!-- base -->
   <path d="M577 465L698 510V734L577 687z" fill="#000" stroke="#444"/><path d="M577 546L698 593" stroke="#555"/>
   <path d="M698 510L1426 496V578L698 593z" fill="#bababa" stroke="#383838"/><path d="M698 593L1426 578V719L698 734z" fill="#6f6f6f" stroke="#383838"/>
   <!-- plates -->
   <path d="M1005 231L1099 228Q1102 228 1102 231V258Q1102 261 1099 262L1005 265Q1002 265 1002 262V234Q1002 231 1005 231z" fill="#b8b8b8" stroke="#3c3c3c" stroke-width="2"/>
   <text x="1007" y="255" class="edge" transform="rotate(-1 1007 255)">edgecam</text><text x="1052" y="261" class="edgeurl">WWW.EDGECAM.PL</text>
   <text x="733" y="290" class="doosan" transform="rotate(-1 733 290)">DOOSAN</text>
   <path d="M797 295L929 292 926 309 794 312z" fill="#925c5c" stroke="#4c3c44"/><path d="M853 294H890V310H853z" fill="#6c3234"/><text x="826" y="308" class="dnm" transform="rotate(-1 826 308)">DNM 400</text>
   <path d="M729 531L890 527Q894 527 894 531V564Q894 568 890 569L729 572Q725 572 725 568V535Q725 531 729 531z" fill="none" stroke="#444" stroke-width="4"/><path d="M729 531L890 527Q894 527 894 531V564Q894 568 890 569L729 572Q725 572 725 568V535Q725 531 729 531z" fill="none" stroke="#999"/>
   <text x="732" y="549" class="nicom" transform="rotate(-1 732 549)">Nicom</text><text x="781" y="547" class="nsub">Profesjonalne Systemy Inżynierskie</text><text x="731" y="564" class="ntag" transform="rotate(-1 731 564)">Twój dostawca CAD/CAM</text>
   <circle cx="490" cy="711" r="13.500" fill="#fff"/><path d="M487 711l3-26 3 26z" fill="#0e0"/><path d="M492 708l24 3-24 3z" fill="#e00"/><path d="M486 711l4-3 5 2-1 5h-6z" fill="#00d"/><path d="M485 711l3-2v4z" fill="#222"/>
  </svg>
  </div>
  <div class="vstrip"><div class="vname">Dynamiczny 0.14</div><div class="vbtns"><button aria-label="Podziel poziomo"><svg viewBox="0 0 10 10"><path d="M.5 1.500h9v7h-9zM1 5h8" fill="none" stroke="#000"/></svg></button><button aria-label="Podziel pionowo"><svg viewBox="0 0 10 10"><path d="M.5 1.500h9v7h-9zM5 2v7" fill="none" stroke="#000"/></svg></button><button class="gap" aria-label="Zamknij widok"><svg viewBox="0 0 10 10"><path d="M1 1l8 8M9 1L1 9" stroke="#888"/></svg></button></div></div>
  <div class="docks">
   <section class="dock coords">
    <div class="phead"><span>Współrzędne</span><button aria-label="Menu"><svg><use href="#dn"/></svg></button><button aria-label="Przypnij"><svg><use href="#pin"/></svg></button><button aria-label="Zamknij"><svg><use href="#x"/></svg></button></div>
    <div class="crow"><label>X<input value="150.00"></label><label>Y<input value="0.00"></label><label>Z<input value="309.00"></label><div class="cbtns"><button class="cbtn down">ZERO</button><button class="cbtn">Globalnie</button><button class="cbtn">Obrabiarka</button></div></div>
   </section>
   <section class="dock sim">
    <div class="phead"><span>Symulacja</span><button aria-label="Menu"><svg><use href="#dn"/></svg></button><button aria-label="Przypnij"><svg><use href="#pin"/></svg></button><button aria-label="Zamknij"><svg><use href="#x"/></svg></button></div>
    <div class="srow">
     <div class="sleft">
      <input class="progress" type="range" min="0" max="100" value="0" aria-label="Postęp">
      <div class="sspeed"><button class="stale"><svg viewBox="0 0 12 12"><circle cx="6" cy="6" r="5" fill="#fff" stroke="#26264c" stroke-width="1.400"/><path d="M6 1v6" stroke="#26264c" stroke-width="1.400"/></svg>Stałe</button><input class="speed" type="range" min="0" max="100" value="49" aria-label="Prędkość"><div class="spin"><button aria-label="Więcej"><svg><use href="#au"/></svg></button><button aria-label="Mniej"><svg><use href="#ad"/></svg></button></div><input class="num" value="1" aria-label="Krok"></div>
     </div>
     <div class="play"><button aria-label="Stop"><svg viewBox="0 0 14 14"><path d="M4 4h6v7H4z" fill="#777"/></svg></button><button aria-label="Początek"><svg viewBox="0 0 14 14"><path d="M1 2h2v10H1zM8 2v10L3 7zM14 2v10L9 7z" fill="#858585"/></svg></button><button aria-label="Wstecz"><svg viewBox="0 0 14 14"><path d="M9 2v10L4 7z" fill="#008"/></svg></button><button aria-label="Dalej"><svg viewBox="0 0 14 14"><path d="M5 2v10l5-5z" fill="#008"/></svg></button><button aria-label="Koniec"><svg viewBox="0 0 14 14"><path d="M11 2h2v10h-2zM1 2v10l5-5zM6 2v10l5-5z" fill="#858585"/></svg></button><button aria-label="Lupa"><svg viewBox="0 0 14 14"><circle cx="6" cy="6" r="4.500" fill="none" stroke="#888"/><path d="M9 9l4 4" stroke="#888" stroke-width="2"/></svg></button></div>
    </div>
   </section>
  </div>
 </section>
</main>
<footer class="status"><span class="ready">Gotowy</span><span class="cell">DOWOLNE</span><span class="cell">ELEMENT</span><span class="cell">SIATKA</span><span class="cell">INS</span><span class="cell">PRO</span><span class="cell lit">XY</span><span class="cell lit">MM</span></footer>
</body>
</html>
```

FILE: styles.css
```css
* { box-sizing: border-box; }
body {
  margin: 0;
  height: 100vh;
  overflow: hidden;
  display: flex;
  flex-direction: column;
  background: linear-gradient(90deg, #d4d0c8, #fafaf8);
  font: 11px/16px "Open Sans", sans-serif;
  color: #000;
}
button { border: 0; padding: 0; margin: 0; background: none; font: inherit; color: inherit; display: flex; align-items: center; justify-content: center; }
input { font: inherit; color: inherit; margin: 0; border-radius: 0; }
a { color: inherit; text-decoration: none; }
i { display: block; }
.defs { position: absolute; width: 0; height: 0; }

/* title and menu */
.titlebar { height: 19px; flex: none; display: flex; justify-content: space-between; align-items: center; padding: 0 2px 0 3px; background: linear-gradient(90deg, #0a246a, #a6caf0); }
.logo { width: 16px; height: 16px; }
.winbtns { display: flex; }
.winbtns button, .vbtns button { width: 15px; height: 14px; background: #d4d0c8; border: 1px solid; border-color: #fff #404040 #404040 #fff; }
.winbtns svg { width: 9px; height: 9px; }
.winbtns .gap { margin-left: 3px; }
.menubar { height: 25px; flex: none; display: flex; align-items: center; gap: 15px; padding: 2px 2px 0 0; }
.menubar .grip { margin-right: -7px; }
.modes { margin-left: auto; display: flex; gap: 2px; align-self: flex-start; padding-top: 1px; }
.modes button { width: 17px; height: 17px; }
.modes svg { width: 15px; height: 15px; }
.modes .on { background: #8c96b4; border: 1px solid #0a246a; }

/* toolbars */
.toolrow { height: 26px; flex: none; display: flex; }
.tbar { display: flex; align-items: center; height: 26px; background: linear-gradient(#fcfcfb, #f0eeea 60%, #c9c5bb); border-bottom: 1px solid #b8b4ac; border-radius: 3px; }
.grip { flex: none; width: 10px; height: 15px; background: radial-gradient(circle, #888 1px, transparent 1px) 4px 0 / 4px 4px; background-clip: content-box; padding: 0 2px 0 4px; }
.tbar:first-child .grip { width: 11px; }
.tbar button { width: 22px; height: 22px; }
.tbar svg { width: 16px; height: 16px; flex: none; }
.tbar .wide { width: 35px; gap: 6px; padding-left: 3px; }
.tbar .wide b { border: 3px solid transparent; border-top-color: #222; border-bottom: 0; }
.tbar .on { background: #c8cee0; border: 1px solid #0a246a; }
.tbar .dim svg { opacity: .6; }
.tbar .txt { width: 39px; color: #8c8c8c; }
.sep { width: 1px; height: 19px; margin: 0 3px 0 4px; background: #a8a59c; }
.more { align-self: stretch; width: 11px; margin-left: 2px; border-radius: 0 3px 3px 0; background: linear-gradient(#444, #444) 3px 16px / 6px 2px no-repeat, linear-gradient(45deg, transparent 50%, #222 50%) 3px 20px / 3px 3px no-repeat, linear-gradient(-45deg, transparent 50%, #222 50%) 6px 20px / 3px 3px no-repeat, linear-gradient(#e4e2de, #8c8a84); }
.combo { appearance: none; height: 19px; margin: 0 2px; padding: 0 4px; border: 2px solid #8c8c8c; border-radius: 0; font: inherit; line-height: 14px; color: #000; background: linear-gradient(45deg, transparent 50%, #222 50%) right 7px center / 3px 3px no-repeat, linear-gradient(-45deg, transparent 50%, #222 50%) right 4px center / 3px 3px no-repeat, #d4d0c8; }
.combo:disabled { color: #8c8c8c; opacity: 1; }
.c1 { width: 97px; }
.c2 { width: 139px; }
.c3 { width: 70px; }

/* work area */
.main { flex: 1; min-height: 0; display: grid; grid-template-columns: 23px 429px 1fr; }
.sidetabs { padding-top: 3px; display: flex; flex-direction: column; gap: 14px; border-top: 1px solid #777; }
.stab { position: relative; width: 22px; height: 104px; flex-direction: column; justify-content: flex-start; gap: 6px; padding-top: 10px; font: 11px/16px "Liberation Sans", Arial, sans-serif; color: #444; }
.stab.t2 { height: 108px; gap: 7px; }
.stab.t3 { height: 100px; }
.stab .ico { width: 16px; height: 16px; position: relative; flex: none; }
.stab span { writing-mode: vertical-rl; position: relative; }
.shape { position: absolute; inset: 0; width: 100%; height: 100%; }

.left { display: flex; flex-direction: column; min-height: 0; }
.phead { height: 17px; flex: none; display: flex; align-items: center; padding: 0 1px 0 4px; background: #808080; color: #d4d0c8; }
.phead span { flex: 1; }
.phead button { width: 17px; color: #222; }
.phead svg { width: 11px; height: 11px; }
.treebox { flex: 1; min-height: 0; margin-top: 2px; border: 1px solid #808080; background: #fff; display: grid; grid-template: 16px minmax(0, 1fr) 16px / minmax(0, 1fr) 17px; }
.thead { background: #d4d0c8; padding-left: 5px; border-bottom: 1px solid #555; line-height: 15px; }
.vscroll { grid-row: 1 / 3; grid-column: 2; display: flex; flex-direction: column; }
.hscroll { display: flex; grid-row: 3; grid-column: 1; }
.treebox::after { content: ""; background: #d4d0c8; grid-row: 3; grid-column: 2; }
.vscroll button, .hscroll button, .thumb { background: #d4d0c8; border: 1px solid; border-color: #f4f2ee #404040 #404040 #f4f2ee; flex: none; }
.vscroll button, .hscroll button { width: 16px; height: 16px; }
.vscroll svg, .hscroll svg { width: 7px; height: 7px; }
.vscroll > *, .vscroll button { width: 17px; }
.thumb { flex: 650 1 0; }
.hscroll .thumb { flex: 342 1 0; }
.dith { flex: 18 1 0; background: #e9e7e3; }
.hscroll .dith { flex: 37 1 0; }
.tree { grid-row: 2; grid-column: 1; margin: 0; padding: 0; list-style: none; overflow: hidden; font: 11px/17px Roboto, Arial, sans-serif; }
.tree li { height: 17px; display: flex; align-items: center; padding-left: 20px; white-space: pre; }
.tree svg { width: 16px; height: 16px; flex: none; margin-right: 3px; }
.tree i { width: 7px; height: 17px; margin: 0 7px 0 4px; flex: none; background: repeating-linear-gradient(90deg, #999 0 1px, transparent 1px 2px) 0 8px / 7px 1px no-repeat, repeating-linear-gradient(#999 0 1px, transparent 1px 2px) 0 0 / 1px 17px no-repeat; }
.exp { width: 9px; height: 9px; margin-right: 9px; flex: none; border: 1px solid #808ca0; background: #f4f4f0; font: bold 9px/7px "Liberation Sans", sans-serif; }
.tree .root { padding-left: 4px; }
.time { position: relative; margin-left: 2px; height: 18px; line-height: 12px; padding: 0 2px; border: 3px solid #dc1e28; background: #fff; }
.tree .arrow { position: absolute; left: 20px; top: 15px; width: 24px; height: 68px; margin: 0; }
.btabs { height: 23px; flex: none; display: flex; padding-left: 1px; }
.btabs button { position: relative; height: 22px; gap: 4px; }
.btabs .w { width: 84px; padding-left: 8px; }
.btabs .b { width: 56px; margin-left: -6px; padding-left: 3px; }
.btabs .o { width: 86px; margin-left: -7px; padding-left: 4px; }
.btabs .ico { width: 13px; height: 13px; position: relative; }
.btabs span { position: relative; }

.right { display: flex; flex-direction: column; min-width: 0; min-height: 0; padding-left: 4px; }
.view { flex: 1; min-height: 0; border-top: 1px solid #555; border-left: 1px solid #666; overflow: hidden; }
.scene { width: 100%; height: 100%; display: block; }
.scene text { fill: #3c3c3c; }
.edge { font: bold 24px Lato, sans-serif; }
.edgeurl { font: bold 5px "Liberation Sans", sans-serif; }
.doosan { font: italic bold 28px "Liberation Sans", Arial, sans-serif; stroke: #3c3c3c; stroke-width: 2px; }
.scene .dnm { font: 15px "Liberation Sans", Arial, sans-serif; fill: #a08080; stroke: #443c40; stroke-width: 1px; paint-order: stroke; }
.scene .nicom { font: italic bold 18px Lato, sans-serif; fill: #a82c2c; stroke: #4c2828; stroke-width: 1px; paint-order: stroke; }
.nsub { font: italic bold 7px Lato, sans-serif; }
.ntag { font: italic bold 14px Lato, sans-serif; }
.vstrip { height: 22px; flex: none; display: flex; justify-content: space-between; background: #d4d0c8; border-bottom: 1px solid #fff; border-left: 1px solid #666; }
.vname { width: 101px; height: 20px; margin-top: 1px; padding-left: 1px; background: #0a246a; color: #fff; font: 11px/15px "Liberation Sans", Arial, sans-serif; }
.vbtns { display: flex; padding: 3px 1px 0 0; }
.vbtns button { width: 13px; height: 12px; }
.vbtns svg { width: 10px; height: 10px; }
.vbtns .gap { margin-left: 2px; }
.docks { flex: none; height: 84px; margin-top: 5px; display: grid; grid-template-columns: 537fr 603fr; gap: 4px; }
.dock { background: #d4d0c8; min-width: 0; }
.crow { display: flex; align-items: flex-start; gap: 7px; padding: 6px 8px; font: 12px/16px "Liberation Sans", Arial, sans-serif; }
.crow label { display: flex; align-items: center; gap: 1px; }
.crow input, .num { width: 68px; height: 23px; border: 1px solid; border-color: #555 #fff #fff #555; border-width: 2px 1px 1px 2px; background: #d4d0c8; padding: 0 2px 4px; }
.cbtns { display: flex; gap: 2px; padding-top: 5px; font-size: 11px; }
.cbtn { width: 65px; height: 16px; background: #d4d0c8; border: 1px solid; border-color: #fff #404040 #404040 #fff; border-width: 1px 2px 2px 1px; }
.cbtn.down { background: #ebe9e5; border-color: #404040 #fff #fff #404040; border-width: 2px 1px 1px 2px; }
.srow { display: flex; padding: 3px 2px 0 11px; gap: 8px; font: 12px/16px "Liberation Sans", Arial, sans-serif; }
.sleft { flex: 1; min-width: 0; display: flex; flex-direction: column; gap: 2px; }
.progress, .speed { appearance: none; background: none; height: 22px; }
.progress { width: 100%; }
.progress::-webkit-slider-runnable-track { height: 14px; background: #fff; border: 1px solid; border-color: #404040 #eee #eee #404040; border-width: 2px 1px 1px 2px; }
.progress::-webkit-slider-thumb { appearance: none; width: 10px; height: 22px; margin: -5px 0 0 -2px; background: #e4e2de; border: 1px solid #777; border-width: 0 2px 2px 1px; clip-path: polygon(50% 0, 100% 20%, 100% 100%, 0 100%, 0 20%); }
.sspeed { display: flex; align-items: center; }
.stale { width: 71px; height: 23px; justify-content: flex-start; gap: 1px; padding-left: 6px; border: 1px solid; border-color: #fff #404040 #404040 #fff; font-size: 11px; }
.stale svg { width: 12px; height: 12px; }
.speed { flex: 1; min-width: 0; margin: 0 7px 0 13px; }
.speed::-webkit-slider-runnable-track { height: 3px; background: #555; border-bottom: 1px solid #fff; }
.speed::-webkit-slider-thumb { appearance: none; width: 7px; height: 13px; margin-top: -5px; background: #d4d0c8; border: 1px solid; border-color: #fff #404040 #404040 #fff; }
.spin button { width: 16px; height: 11px; background: #d4d0c8; border: 1px solid; border-color: #fff #404040 #404040 #fff; }
.spin svg { width: 4px; height: 4px; }
.num { width: 26px; }
.play { display: flex; padding-top: 1px; }
.play button { width: 23px; height: 14px; }
.play svg { width: 13px; height: 13px; }

.status { height: 20px; flex: none; display: flex; align-items: center; gap: 2px; border-bottom: 1px solid #c8c4bc; }
.ready { flex: 1; padding-left: 5px; }
.cell { height: 17px; border: 1px solid #808080; padding: 0 1px; line-height: 16px; color: #8c8c8c; background: #fafaf8; }
.lit { color: #000; }
```
